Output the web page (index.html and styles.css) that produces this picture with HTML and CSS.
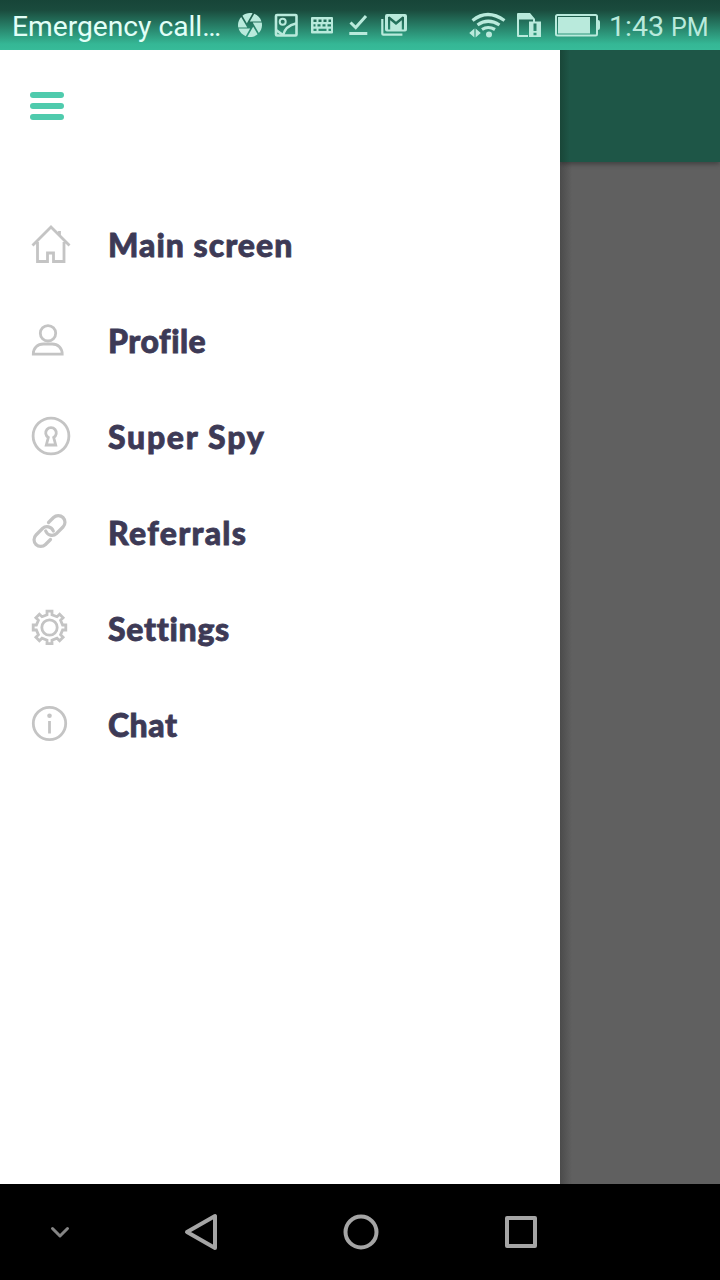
FILE: index.html
```html
<!DOCTYPE html>
<html lang="en">

<head>
    <meta charset="UTF-8">
    <meta name="viewport" content="width=device-width, initial-scale=1.0">
    <title>Menu</title>
    <link rel="stylesheet" href="styles.css">
</head>

<body>
    <header class="status-bar">
        <span class="carrier">Emergency call…</span>
        <div class="notifications">
            <svg width="28" height="28" viewBox="0.33 0.33 23.33 23.33" fill="currentColor">
                <path d="M9.4 10.5l4.77-8.26C13.47 2.09 12.75 2 12 2c-2.4 0-4.6.85-6.32 2.25l3.66 6.35.06-.1zM21.54 9c-.92-2.92-3.15-5.26-6-6.34L11.88 9h9.66zm.26 1h-7.49l.29.5 4.76 8.25C21 16.97 22 14.61 22 12c0-.69-.07-1.35-.2-2zM8.54 12l-3.9-6.75C3.01 7.03 2 9.39 2 12c0 .69.07 1.35.2 2h7.49l-1.15-2zm-6.08 3c.92 2.92 3.15 5.26 6 6.34L12.12 15H2.46zm11.27 0l-3.9 6.76c.7.15 1.42.24 2.17.24 2.4 0 4.6-.85 6.32-2.25l-3.66-6.35-.93 1.6z"/>
            </svg>
            <svg width="28" height="28" viewBox="0 0 28 28" fill="none" stroke="currentColor">
                <rect x="4" y="4" width="20.5" height="20.5" rx="1" stroke-width="2.6"/>
                <circle cx="10.7" cy="10.7" r="3" stroke-width="2"/>
                <path d="M4 19l7 5M11 24.5C12.5 18 17 14 24 12.5" stroke-width="2.6"/>
            </svg>
            <svg width="28" height="28" viewBox="0 0 28 28" fill="currentColor">
                <path fill-rule="evenodd" d="M4 6h20q1 0 1 1v14.500q0 1-1 1H4q-1 0-1-1V7q0-1 1-1zM5.500 8.500v2.500h3v-2.500zM10.500 8.500v2.500h3v-2.500zM15.500 8.500v2.500h3v-2.500zM20.500 8.500v2.500h2.500v-2.500zM5.500 13.200v2.300h2v-2.300zM9.500 13.200v2.300h3v-2.300zM14.500 13.200v2.300h3v-2.300zM19.500 13.200v2.300h3.500v-2.300zM5.500 17.700v2.300h3v-2.300zM10.500 17.700v2.300h8v-2.300zM20.500 17.700v2.300h2.500v-2.300z"/>
            </svg>
            <svg width="28" height="28" viewBox="0 0 28 28" fill="none" stroke="currentColor" stroke-width="3">
                <path d="M6.5 11.5l5.2 5L22 5M5.300 22.500h18"/>
            </svg>
            <svg width="28" height="28" viewBox="0 0 28 28" fill="currentColor">
                <path d="M1.200 8h2.200v14.500h19v2.300H3.200q-2 0-2-2z"/>
                <path fill-rule="evenodd" d="M7 3h18q2 0 2 2v13.500q0 2-2 2H7q-2 0-2-2V5q0-2 2-2zM8 6v12.500h2.200V9.200L16 14l5.800-4.800v9.300H24V6l-1.500-.5L16 10.800 9.500 5.500z"/>
            </svg>
        </div>
        <div class="system">
            <svg width="38" height="28" viewBox="469 11 38 28" fill="none" stroke="currentColor">
                <path d="M472.500 20.500q15-12 32 0M477.500 25q10.500-7.500 22 0M482 29.500q6-4 13 0" stroke-width="3.2"/>
                <circle cx="489" cy="34.5" r="3" fill="currentColor" stroke="none"/>
                <path d="M474.400 28.500v9l-5.200-4.500zM475.600 28.500v9l5.200-4.500z" fill="currentColor" stroke="none"/>
            </svg>
            <svg class="sim" width="28" height="28" viewBox="515 11 28 28" fill="currentColor">
                <path fill-rule="evenodd" d="M517 14q0-1 1-1h12l5 6v3h-2v-2.500h-14V35h9v2h-10q-1 0-1-1z"/>
                <path fill-rule="evenodd" d="M529 21.500h12V37h-12zM533.500 23.500v7.500h3v-7.500zM533.500 32.700v2.600h3v-2.600z"/>
            </svg>
            <svg class="battery" width="46" height="28" viewBox="555 11 46 28">
                <rect x="556" y="15" width="41" height="20.5" rx="1.5" fill="none" stroke="currentColor" stroke-width="2"/>
                <path d="M558 17h32v16.500h-32zM598 20q2 0 2 2v6q0 2-2 2z" fill="currentColor"/>
            </svg>
            <span class="clock">1:43 <small>PM</small></span>
        </div>
    </header>

    <main class="screen">
        <aside class="drawer">
            <div class="menu-toggle">
                <span></span>
                <span></span>
                <span></span>
            </div>
            <nav class="menu">
                <a class="item main-screen">
                    <svg width="40" height="40" viewBox="0 0 40 40">
                        <path d="M1.500 21.500L20 3l18.500 18.500M6.500 18v19.500h10v-8.500h6v8.500H33V18M28.500 11V7"/>
                    </svg>
                    <span>Main screen</span>
                </a>
                <a class="item profile">
                    <svg width="40" height="40" viewBox="0 0 40 40">
                        <circle cx="17" cy="13.3" r="7.7"/>
                        <path d="M2.300 34.200c0-6 4.200-10.200 10.200-10.200h8.500c6 0 10.200 4.200 10.200 10.200z"/>
                    </svg>
                    <span>Profile</span>
                </a>
                <a class="item super-spy">
                    <svg width="40" height="40" viewBox="0 0 40 40">
                        <circle cx="20" cy="20" r="17.9"/>
                        <path d="M17.300 21.500a5.300 5.300 0 1 1 5.400 0l2 7.500h-9.400z"/>
                    </svg>
                    <span>Super Spy</span>
                </a>
                <a class="item referrals">
                    <svg width="40" height="40" viewBox="0 0 40 40">
                        <path d="M17.500 10.500l5-5a6.700 6.700 0 0 1 9.500 9.500L25.500 21.500A6.700 6.700 0 0 1 14.700 19M19.500 27.500l-5 5A6.700 6.700 0 0 1 5 23l6.500-6.500A6.700 6.700 0 0 1 22.300 19"/>
                    </svg>
                    <span>Referrals</span>
                </a>
                <a class="item settings">
                    <svg width="40" height="40" viewBox="-18.5 -19.5 40 40">
                        <circle r="7.7"/>
                        <path d="M-2.500-16.300h5v3.500l5 2 2.600-2.400 3.500 3.500-2.500 2.500 2 4.700h3.200v5h-3.200l-2 4.700 2.500 2.500-3.500 3.500-2.600-2.500-5 2v3.400h-5v-3.400l-5-2-2.600 2.500-3.500-3.500 2.500-2.500-2-4.700h-3.200v-5h3.200l2-4.700-2.500-2.500 3.500-3.500 2.600 2.400 5-2z"/>
                    </svg>
                    <span>Settings</span>
                </a>
                <a class="item chat">
                    <svg width="40" height="40" viewBox="0 0 40 40">
                        <circle cx="18.5" cy="19.5" r="16.2"/>
                        <circle class="dot" cx="18.5" cy="11.7" r="2.3"/>
                        <path d="M18.500 17v12.500"/>
                    </svg>
                    <span>Chat</span>
                </a>
            </nav>
        </aside>
        <section class="content">
            <div class="app-bar"></div>
        </section>
    </main>

    <footer class="nav-bar">
        <svg class="hide-keys" width="120" height="96" viewBox="0 0 120 96">
            <path d="M52.500 44.500l7.500 7.500 7.500-7.500"/>
        </svg>
        <svg width="160" height="96" viewBox="120 0 160 96">
            <path d="M187 48l28-16v32z"/>
        </svg>
        <svg width="160" height="96" viewBox="280 0 160 96">
            <circle cx="361" cy="48" r="15.5"/>
        </svg>
        <svg width="160" height="96" viewBox="440 0 160 96">
            <rect x="507" y="34" width="28" height="28"/>
        </svg>
    </footer>
</body>

</html>
```

FILE: styles.css
```css
* {
    box-sizing: border-box;
}

body {
    margin: 0;
    height: 1280px;
    display: flex;
    flex-direction: column;
    overflow: hidden;
    font-family: Roboto, sans-serif;
    background: #000;
}

svg {
    display: block;
    flex: none;
}

/* status bar */
.status-bar {
    height: 50px;
    flex: none;
    display: flex;
    align-items: center;
    padding: 0 12px;
    background: linear-gradient(#174538 0, #1a4b3d 10px, #35b795 44px, #37bb99 100%);
    color: #b9eadc;
    white-space: nowrap;
}

.carrier {
    width: 224px;
    flex: none;
    font-size: 28.2px;
    line-height: 48px;
    padding-top: 4px;
    color: #e2fff7;
}

.notifications {
    display: flex;
    flex: none;
    gap: 8px;
}

.system {
    display: flex;
    flex: none;
    align-items: center;
    margin-left: 61px;
}

.sim {
    margin-left: 8px;
}

.battery {
    margin-left: 12px;
}

.clock {
    margin-left: 8px;
    padding-top: 2px;
    font-size: 28.5px;
}

.clock small {
    font-size: 25px;
}

.screen {
    flex: 1;
    display: flex;
}

/* drawer */
.drawer {
    width: 560px;
    flex: none;
    background: #fff;
}

.menu-toggle {
    height: 146px;
    padding: 42px 30px 0;
    display: flex;
    flex-direction: column;
    gap: 5px;
}

.menu-toggle span {
    width: 34px;
    height: 6px;
    border-radius: 3px;
    background: #4fcbad;
}

.item {
    height: 96px;
    display: flex;
    align-items: center;
    gap: 37px;
    padding-left: 31px;
    font-family: Lato, sans-serif;
    font-size: 32px;
    font-weight: 900;
    letter-spacing: 1px;
    font-variant-ligatures: none;
    -webkit-text-stroke: 0.8px #3d3a56;
    color: #3d3a56;
}

.item.profile {
    letter-spacing: 0.5px;
}

.item.super-spy {
    letter-spacing: 1.7px;
}

.item.referrals {
    letter-spacing: 1.3px;
}

.item.settings {
    letter-spacing: 0.7px;
}

.item.chat {
    letter-spacing: 0.5px;
}

.item svg {
    fill: none;
    stroke: #c4c4c4;
    stroke-width: 2.8;
}

.item .dot {
    fill: #c4c4c4;
    stroke: none;
}

.item.referrals svg {
    stroke-width: 3.2;
    stroke-linecap: round;
}

/* dimmed page behind the drawer */
.content {
    flex: 1;
    overflow: hidden;
    background: linear-gradient(to right, #4b4b4b, #606060 12px);
}

.app-bar {
    height: 112px;
    background: linear-gradient(to right, #194638, #1e5647 10px);
    box-shadow: 0 2px 5px rgba(0, 0, 0, 0.35);
}

/* system buttons */
.nav-bar {
    height: 96px;
    flex: none;
    display: flex;
    background: #000;
}

.nav-bar svg {
    fill: none;
    stroke: #a5a5a5;
    stroke-width: 4;
    stroke-linejoin: round;
    stroke-linecap: round;
}

.nav-bar .hide-keys {
    stroke: #858585;
    stroke-width: 3;
}
```
